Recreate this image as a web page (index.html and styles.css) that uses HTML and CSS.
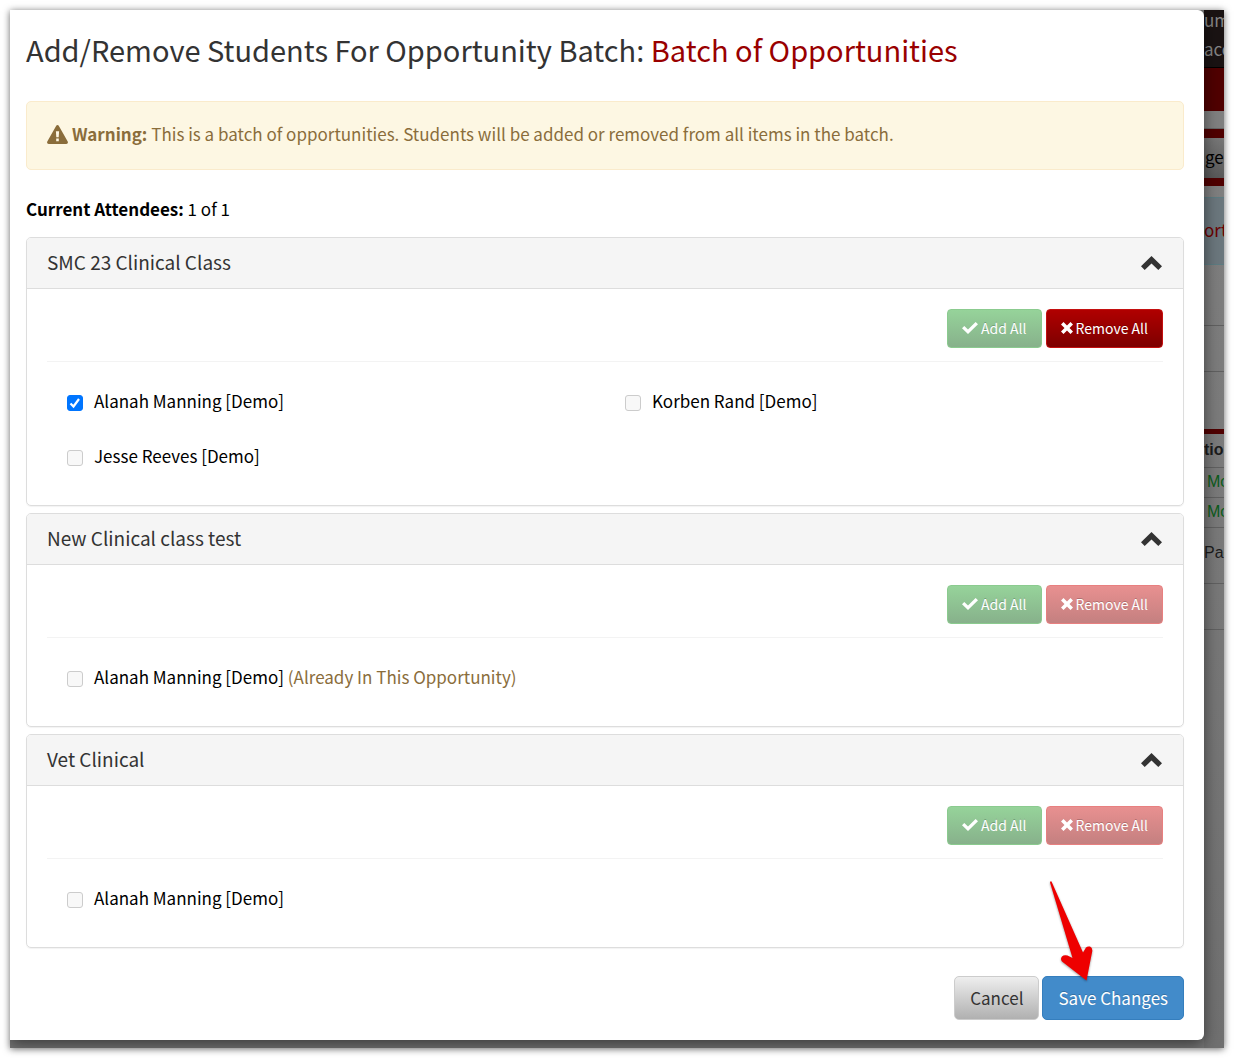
FILE: index.html
```html
<!DOCTYPE html>
<html lang="en">
<head>
  <meta charset="UTF-8" />
  <meta name="viewport" content="width=device-width, initial-scale=1.0" />
  <title>Add/Remove Students</title>
  <link rel="stylesheet" href="styles.css">
</head>
<body>
  <svg class="sprite" aria-hidden="true">
    <symbol id="icon-warning" viewBox="0 0 21 19">
      <path fill-rule="evenodd" d="M10.500 0C9.900 0 9.400 .3 9.100 .9L.3 16.400C-.3 17.600 .4 19 1.700 19H19.300C20.600 19 21.300 17.600 20.700 16.400L11.900 .9C11.600 .3 11.100 0 10.500 0ZM8.900 6.300H12.100L11.700 12.300H9.300ZM9.200 13.600H11.800V16.200H9.200Z"/>
    </symbol>
    <symbol id="icon-chevron" viewBox="0 0 21 14">
      <path d="M10.500 0L21 10.300L17.300 14L10.500 7.600L3.700 14L0 10.300Z"/>
    </symbol>
    <symbol id="icon-check" viewBox="0 0 16 12">
      <path d="M0 6.300L2.300 4L6 7.600L13.600 0L16 2.300L6 12Z"/>
    </symbol>
    <symbol id="icon-times" viewBox="0 0 12 12">
      <path d="M2.500 0L6 3.500L9.500 0L12 2.500L8.500 6L12 9.500L9.500 12L6 8.500L2.500 12L0 9.500L3.500 6L0 2.500Z"/>
    </symbol>
  </svg>

  <div class="screen">
    <div class="page">
      <div class="topbar"><span>um</span><span>acc</span></div>
      <div class="banner"></div>
      <div class="spacer"></div>
      <div class="nav">ge</div>
      <div class="notice">ort</div>
      <div class="row row-first"></div>
      <div class="row row-short"></div>
      <div class="row row-tall"></div>
      <div class="row row-head">tion</div>
      <div class="row row-more">Mo</div>
      <div class="row row-more">Mo</div>
      <div class="row row-pack">Pac</div>
      <div class="row row-short"></div>
    </div>

    <div class="modal" role="dialog" aria-labelledby="title">
      <h1 id="title">Add/Remove Students For Opportunity Batch: <span>Batch of Opportunities</span></h1>

      <div class="alert">
        <svg class="icon-warning"><use href="#icon-warning"/></svg>
        <p><strong>Warning:</strong> This is a batch of opportunities. Students will be added or removed from all items in the batch.</p>
      </div>

      <p class="attendees"><strong>Current Attendees:</strong> 1 of 1</p>

      <form>
        <section class="panel">
          <header class="panel-heading">
            <h2>SMC 23 Clinical Class</h2>
            <button type="button" class="toggle" aria-label="Collapse"><svg><use href="#icon-chevron"/></svg></button>
          </header>
          <div class="panel-body">
            <div class="actions">
              <button type="button" class="btn btn-add" disabled><svg class="icon-check"><use href="#icon-check"/></svg>Add All</button>
              <button type="button" class="btn btn-remove"><svg class="icon-times"><use href="#icon-times"/></svg>Remove All</button>
            </div>
            <div class="students">
              <div class="student">
                <input type="checkbox" id="s1" checked>
                <label for="s1">Alanah Manning [Demo]</label>
              </div>
              <div class="student">
                <input type="checkbox" id="s2" disabled>
                <label for="s2">Korben Rand [Demo]</label>
              </div>
              <div class="student">
                <input type="checkbox" id="s3" disabled>
                <label for="s3">Jesse Reeves [Demo]</label>
              </div>
            </div>
          </div>
        </section>

        <section class="panel">
          <header class="panel-heading">
            <h2>New Clinical class test</h2>
            <button type="button" class="toggle" aria-label="Collapse"><svg><use href="#icon-chevron"/></svg></button>
          </header>
          <div class="panel-body">
            <div class="actions">
              <button type="button" class="btn btn-add" disabled><svg class="icon-check"><use href="#icon-check"/></svg>Add All</button>
              <button type="button" class="btn btn-remove" disabled><svg class="icon-times"><use href="#icon-times"/></svg>Remove All</button>
            </div>
            <div class="students">
              <div class="student">
                <input type="checkbox" id="s4" disabled>
                <label for="s4">Alanah Manning [Demo] <span class="note">(Already In This Opportunity)</span></label>
              </div>
            </div>
          </div>
        </section>

        <section class="panel">
          <header class="panel-heading">
            <h2>Vet Clinical</h2>
            <button type="button" class="toggle" aria-label="Collapse"><svg><use href="#icon-chevron"/></svg></button>
          </header>
          <div class="panel-body">
            <div class="actions">
              <button type="button" class="btn btn-add" disabled><svg class="icon-check"><use href="#icon-check"/></svg>Add All</button>
              <button type="button" class="btn btn-remove" disabled><svg class="icon-times"><use href="#icon-times"/></svg>Remove All</button>
            </div>
            <div class="students">
              <div class="student">
                <input type="checkbox" id="s5" disabled>
                <label for="s5">Alanah Manning [Demo]</label>
              </div>
            </div>
          </div>
        </section>

        <footer class="modal-footer">
          <button type="button" class="btn-lg btn-cancel">Cancel</button>
          <button type="submit" class="btn-lg btn-save">Save Changes</button>
          <svg class="arrow" viewBox="0 0 44 102" aria-hidden="true">
            <path d="M2.500 1.500L34 72.500L37 67.500Q38.500 66 41 66.500Q43.500 67.500 43.300 71L37.500 100.500L13 81.500Q11 79 13 76.500Q15 74.500 18.500 75.500L23.500 78L1 2.500Q1.500 .5 2.500 1.500Z"/>
          </svg>
        </footer>
      </form>
    </div>
  </div>
</body>
</html>
```

FILE: styles.css
```css
* {
  box-sizing: border-box;
}
body {
  margin: 0;
  padding: 10px;
  background-color: #fff;
  color: #000;
  font-family: "Noto Sans CJK JP", "Noto Sans", sans-serif;
  font-size: 17px;
  line-height: 24px;
}
h1, h2, p {
  margin: 0;
}
button {
  font-family: inherit;
  cursor: pointer;
}
button:disabled {
  cursor: not-allowed;
}
svg {
  fill: currentColor;
}
.sprite {
  position: absolute;
  width: 0;
  height: 0;
}

/* dimmed page behind the dialog */
.screen {
  display: grid;
  background-color: #777;
  box-shadow: 0 1px 7px rgba(0, 0, 0, 0.6);
}
.page, .modal {
  grid-area: 1 / 1;
}
.page {
  justify-self: end;
  width: 20px;
  overflow: hidden;
  background-color: #808080;
  background-image: linear-gradient(#828282, #707070);
  white-space: nowrap;
}
.topbar {
  display: flex;
  flex-direction: column;
  gap: 9px;
  height: 58px;
  background-color: #1a1313;
  border-bottom: 1px solid #000;
  color: #858585;
  line-height: 20px;
}
.banner {
  height: 43px;
  background-color: #500000;
}
.spacer {
  height: 18px;
  border-bottom: 1px solid #666;
}
.nav {
  height: 57px;
  padding: 0 1px;
  border-top: 9px solid #500000;
  border-bottom: 8px solid #500000;
  background-image: linear-gradient(#777, #595959);
  line-height: 38px;
}
.notice {
  height: 68px;
  margin-top: 11px;
  border: 1px solid #5d7c82;
  border-width: 1px 0;
  background-color: #6b777d;
  color: #6b0000;
  line-height: 64px;
}
.row {
  height: 30px;
  border-bottom: 1px solid #606060;
  font-family: "Liberation Sans", Arial, sans-serif;
  font-size: 16px;
  line-height: 27px;
  color: #1c1c1c;
}
.row-first {
  height: 61px;
}
.row-short {
  height: 46px;
}
.row-tall {
  height: 62px;
  border-bottom: 5px solid #500000;
}
.row-head {
  height: 34px;
  font-weight: bold;
  line-height: 31px;
}
.row-more {
  padding-left: 3px;
  color: #0b5c1b;
}
.row-pack {
  height: 56px;
  line-height: 49px;
}

/* dialog */
.modal {
  margin-right: 20px;
  margin-bottom: 8px;
  padding: 20px 20px 20px 16px;
  background-color: #fff;
  border-radius: 0 6px 6px 0;
  box-shadow: 0 5px 15px rgba(0, 0, 0, 0.5);
  clip-path: inset(0 -20px -8px 0);
}
h1 {
  color: #333;
  font-size: 29px;
  font-weight: 400;
  line-height: 38px;
}
h1 span {
  color: #900;
}
.alert {
  display: flex;
  align-items: center;
  gap: 4px;
  margin-top: 33px;
  padding: 20px 20px 23px;
  border: 1px solid #faebcc;
  border-radius: 5px;
  background-color: #fdf7e3;
  color: #8a6d3b;
}
.icon-warning {
  width: 21px;
  height: 19px;
}
.attendees {
  margin-top: 27px;
  margin-bottom: 16px;
}
.panel {
  margin-bottom: 7px;
  border: 1px solid #ddd;
  border-radius: 5px;
  box-shadow: 0 1px 1px rgba(0, 0, 0, 0.05);
}
.panel-heading {
  display: flex;
  align-items: center;
  justify-content: space-between;
  padding: 10px 21px 10px 20px;
  border-bottom: 1px solid #ddd;
  border-radius: 4px 4px 0 0;
  background-color: #f5f5f5;
  color: #333;
}
h2 {
  padding-bottom: 3px;
  font-size: 19px;
  font-weight: 400;
  line-height: 27px;
}
.toggle {
  display: flex;
  padding: 0;
  border: 0;
  background: none;
  color: #333;
}
.toggle svg {
  width: 21px;
  height: 14px;
}
.panel-body {
  padding: 20px;
}
.actions {
  display: flex;
  justify-content: flex-end;
  gap: 4px;
  padding-bottom: 13px;
  border-bottom: 1px solid #f3f3f3;
}
.btn {
  display: flex;
  align-items: center;
  gap: 3px;
  height: 39px;
  padding: 0 14px 1px;
  border: 1px solid;
  border-radius: 4px;
  color: #fff;
  font-size: 14px;
  text-shadow: 0 -1px 0 rgba(0, 0, 0, 0.2);
}
.btn-add {
  border-color: #5cb85c;
  background-image: linear-gradient(#2ea836, #0f6a18);
}
.btn-remove {
  border-color: #c41010;
  background-image: linear-gradient(#b00000, #7d0000);
}
.btn-add:disabled {
  border-color: #8bcb8f;
  background-image: linear-gradient(#96d39a, #87b18b);
}
.btn-remove:disabled {
  border-color: #e88080;
  background-image: linear-gradient(#e89090, #c48080);
}
.icon-check {
  width: 16px;
  height: 12px;
}
.icon-times {
  width: 12px;
  height: 12px;
}
.students {
  display: grid;
  grid-template-columns: 1fr 1fr;
  padding-top: 13px;
}
.student {
  display: flex;
  align-items: center;
  gap: 11px;
  height: 55px;
  padding-left: 20px;
}
.student label {
  padding-bottom: 3px;
}
.student input {
  appearance: none;
  width: 16px;
  height: 16px;
  margin: 0;
  border: 1px solid #ccc;
  border-radius: 3px;
  background-color: #f8f8f8;
}
.student input:checked {
  border-color: #0075ff;
  background: #0075ff url("data:image/svg+xml,%3Csvg xmlns='http://www.w3.org/2000/svg' viewBox='0 0 14 14'%3E%3Cpath d='M2.500 7.500L5.500 10.500L11 3' fill='none' stroke='white' stroke-width='2.200'/%3E%3C/svg%3E");
}
.note {
  color: #8a6d3b;
}
.modal-footer {
  position: relative;
  display: flex;
  justify-content: flex-end;
  gap: 3px;
  margin-top: 28px;
}
.btn-lg {
  height: 44px;
  padding: 0 15px 2px;
  border: 1px solid #ccc;
  border-radius: 5px;
  font-size: 17px;
}
.btn-cancel {
  background-image: linear-gradient(#eee, #b0b0b0);
  color: #333;
}
.btn-save {
  border-color: #357ebd;
  background-color: #428bca;
  color: #fff;
  text-shadow: 0 -1px 0 rgba(0, 0, 0, 0.2);
}
.arrow {
  position: absolute;
  right: 91px;
  bottom: 38px;
  width: 44px;
  height: 102px;
  fill: #ee0000;
  filter: drop-shadow(0 1px 1px rgba(0, 0, 0, 0.4));
}
```
